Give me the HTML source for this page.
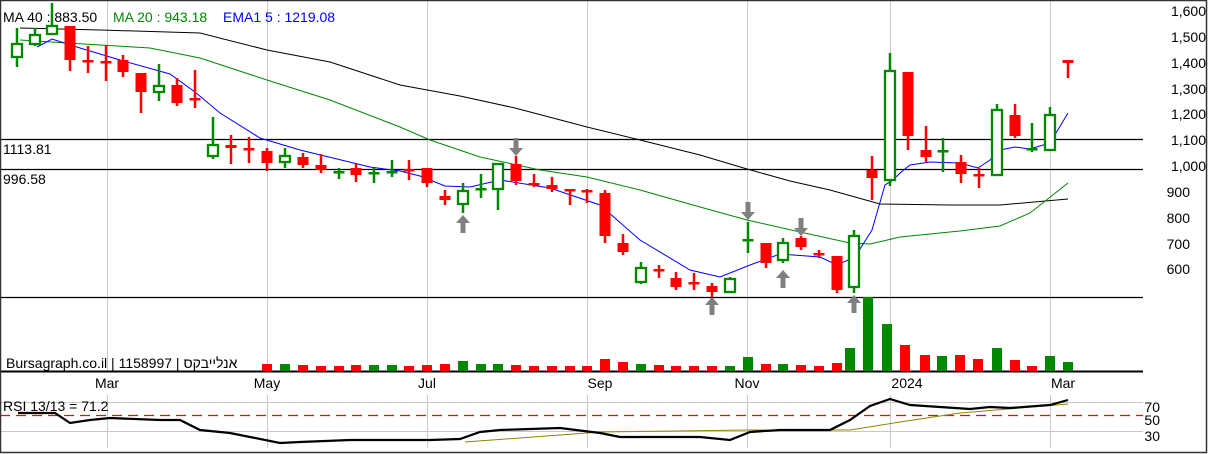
<!DOCTYPE html>
<html><head><meta charset="utf-8"><style>
html,body{margin:0;padding:0;background:#fff;}
svg{display:block;font-family:"Liberation Sans",sans-serif;}
</style></head><body>
<svg id="c" width="1208" height="454" viewBox="0 0 1208 454" xmlns="http://www.w3.org/2000/svg">
<rect x="0" y="0" width="1208" height="454" fill="#fff"/>
<g stroke="#c8c8c8" stroke-width="1">
<line x1="107.5" y1="0" x2="107.5" y2="371"/><line x1="267.5" y1="0" x2="267.5" y2="371"/>
<line x1="427.5" y1="0" x2="427.5" y2="371"/><line x1="587.5" y1="0" x2="587.5" y2="371"/>
<line x1="747.5" y1="0" x2="747.5" y2="371"/><line x1="890.5" y1="0" x2="890.5" y2="371"/>
<line x1="1050.5" y1="0" x2="1050.5" y2="371"/>
<line x1="107.5" y1="395" x2="107.5" y2="448"/><line x1="267.5" y1="395" x2="267.5" y2="448"/>
<line x1="427.5" y1="395" x2="427.5" y2="448"/><line x1="587.5" y1="395" x2="587.5" y2="448"/>
<line x1="747.5" y1="395" x2="747.5" y2="448"/><line x1="890.5" y1="395" x2="890.5" y2="448"/>
<line x1="1050.5" y1="395" x2="1050.5" y2="448"/>
<line x1="0" y1="402.5" x2="1143" y2="402.5"/><line x1="0" y1="431.5" x2="1143" y2="431.5"/>
</g>
<line x1="0" y1="415.5" x2="1143" y2="415.5" stroke="#f00" stroke-width="1.3" stroke-dasharray="10,6"/>
<g stroke="#000" stroke-width="1.3">
<line x1="0" y1="139.5" x2="1143" y2="139.5"/><line x1="0" y1="169.5" x2="1143" y2="169.5"/>
<line x1="0" y1="297.5" x2="1143" y2="297.5"/>
</g>
<line x1="0" y1="371.5" x2="1143" y2="371.5" stroke="#000" stroke-width="2"/>
<rect x="0.5" y="0.5" width="1206" height="452" fill="none" stroke="#333" stroke-width="1.5"/>
<polyline fill="none" stroke="#000" stroke-width="1" points="20,28 100,30 200,33 267,50 330,62 400,85 460,96 515,108 587,127 640,140 700,155 747,169 790,181 830,190 880,204 950,205 1000,205 1068,199"/>
<polyline fill="none" stroke="#080" stroke-width="1" points="20,40 100,45 150,48 200,58 267,80 330,100 400,127 430,140 480,157 540,170 587,177 640,190 700,207 747,220 800,232 850,243 870,244 900,237 960,231 1000,226 1030,213 1068,183"/>
<polyline fill="none" stroke="#00f" stroke-width="1" points="37,47 52,39 80,48 120,60 170,74 195,92 220,113 260,138 300,150 370,167 400,171 420,176 445,186 470,187 500,180 550,188 600,205 640,240 690,270 720,277 750,265 780,254 820,257 837,265 855,257 872,230 885,185 893,180 900,173 910,165 930,162 960,163 978,168 990,160 1000,150 1015,147 1030,149 1050,143 1068,113"/>
<g id="cand"></g>
<g id="vol"></g>
<polyline fill="none" stroke="#880" stroke-width="1" points="465,442 600,432 750,430 850,430 900,422 960,413 1068,404"/>
<polyline fill="none" stroke="#000" stroke-width="2.2" points="18,413 55,413 70,423 90,420 110,418 160,420 180,420 200,430 230,433 280,443 300,442 350,440 400,440 430,440 460,439 480,432 500,430 560,428 600,433 620,437 700,437 730,440 750,432 780,430 830,430 850,420 870,406 890,399 910,405 940,407 970,409 990,407 1010,408 1050,405 1068,400"/>
<g font-size="14" fill="#000">
<text x="3" y="22">MA 40 : 883.50</text>
<text x="113" y="22" fill="#080">MA 20 : 943.18</text>
<text x="223" y="22" fill="#00f">EMA1 5 : 1219.08</text>
<text x="3" y="154">1113.81</text>
<text x="3" y="184">996.58</text>
<text x="6" y="368">Bursagraph.co.il | 1158997 | אנלייבקס</text>
<text x="3" y="411">RSI 13/13 = 71.2</text>
<g fill="#000">
<text x="107" y="388" text-anchor="middle">Mar</text><text x="267" y="388" text-anchor="middle">May</text>
<text x="427" y="388" text-anchor="middle">Jul</text><text x="600" y="388" text-anchor="middle">Sep</text>
<text x="747" y="388" text-anchor="middle">Nov</text><text x="907" y="388" text-anchor="middle">2024</text>
<text x="1063" y="388" text-anchor="middle">Mar</text>
</g>
<g fill="#000" text-anchor="end">
<text x="1206" y="16">1,600</text><text x="1206" y="42">1,500</text><text x="1206" y="68">1,400</text>
<text x="1206" y="94">1,300</text><text x="1206" y="119">1,200</text><text x="1206" y="145">1,100</text>
<text x="1206" y="171">1,000</text><text x="1190" y="197">900</text><text x="1190" y="223">800</text>
<text x="1190" y="249">700</text><text x="1190" y="274">600</text>
<text x="1160" y="412">70</text><text x="1160" y="425">50</text><text x="1160" y="441">30</text>
</g>
</g>
</svg>
<script>
var C=[[17,'g',44,57,28,67],[35,'g',35,44,28,46],[52,'g',26,34,3,34],[70,'r',26,60,26,71],[88,'r',60,62,46,73],[106,'r',61,63,45,81],[123,'r',60,72,55,77],[141,'r',73,92,73,113],[159,'g',86,92,64,101],[177,'r',85,103,78,106],[195,'r',98,100,70,108],[213,'g',145,156,117,159],[231,'r',145,148,135,164],[249,'r',148,150,137,163],[267,'r',151,163,148,171],[285,'g',156,162,148,168],[303,'r',157,165,153,168],[321,'r',165,170,154,173],[339,'G',171,173,168,179],[356,'r',168,175,164,182],[374,'G',172,174,168,183],[392,'G',171,173,160,177],[409,'r',169,171,160,180],[427,'r',168,183,168,187],[445,'r',196,200,190,205],[463,'g',191,204,183,213],[481,'G',188,190,174,198],[498,'g',164,189,164,210],[516,'r',164,181,156,185],[534,'r',183,185,174,187],[552,'r',185,189,177,192],[570,'r',189,191,189,205],[587,'r',190,192,189,203],[605,'r',193,236,190,243],[623,'r',243,252,234,255],[641,'g',268,282,262,284],[659,'r',269,271,265,278],[676,'r',278,287,272,290],[694,'r',282,284,273,290],[712,'r',286,292,283,297],[730,'g',279,292,277,292],[748,'G',239,241,222,253],[766,'r',243,263,243,268],[783,'g',243,260,238,263],[801,'r',238,247,236,250],[819,'r',253,255,250,258],[837,'r',256,290,256,293],[854,'g',236,287,230,293],[872,'r',170,178,156,200],[890,'g',71,180,53,186],[908,'r',72,136,72,150],[926,'r',150,157,126,162],[943,'G',150,152,138,172],[961,'r',162,174,155,183],[979,'r',174,176,168,188],[997,'g',110,175,104,175],[1015,'r',115,136,104,138],[1032,'G',148,150,123,152],[1050,'g',115,150,107,150],[1068,'r',60,63,60,78]];
var s='';C.forEach(function(c){var x=c[0],t=c[1],col=(t=='r')?'#f00':'#080';
s+='<line x1="'+x+'" y1="'+c[4]+'" x2="'+x+'" y2="'+c[5]+'" stroke="'+col+'" stroke-width="2.5"/>';
if(t=='g')s+='<rect x="'+(x-5)+'" y="'+c[2]+'" width="10" height="'+(c[3]-c[2])+'" fill="#fff" stroke="#080" stroke-width="2.3"/>';
else{var h=Math.max(c[3]-c[2],2.5);s+='<rect x="'+(x-5.5)+'" y="'+c[2]+'" width="11" height="'+h+'" fill="'+col+'"/>';}});
[[463,'d',215],[516,'u',138],[712,'d',297],[748,'u',202],[783,'d',270],[801,'u',218],[854,'d',295]].forEach(function(a){var x=a[0],y=a[2];
if(a[1]=='d')s+='<path d="M'+x+' '+y+' l-7 8 h4.5 v10 h5 v-10 h4.5z" fill="#808080"/>';
else s+='<path d="M'+(x-2.5)+' '+y+' v10 h-4.5 l7 8 l7 -8 h-4.5 v-10z" fill="#808080"/>';});
document.getElementById('cand').innerHTML=s;
var V=[[267,'r',364],[285,'g',364],[303,'r',365],[321,'r',366],[339,'r',366],[356,'r',365],[374,'g',365],[392,'g',365],[409,'r',366],[427,'r',365],[445,'r',364],[463,'g',361],[481,'g',364],[498,'g',364],[516,'r',365],[534,'r',366],[552,'r',366],[570,'r',366],[587,'r',366],[605,'r',359],[623,'r',362],[641,'g',364],[659,'r',365],[676,'r',366],[694,'r',366],[712,'r',366],[730,'g',366],[748,'g',357],[766,'r',364],[783,'g',364],[801,'r',365],[819,'r',366],[837,'r',363],[850,'g',348],[868,'g',297],[887,'g',324],[905,'r',345],[925,'r',355],[942,'g',356],[960,'r',355],[978,'r',359],[997,'g',348],[1015,'r',360],[1032,'r',366],[1050,'g',356],[1068,'g',362]];
var v='';V.forEach(function(b){v+='<rect x="'+(b[0]-5)+'" y="'+b[2]+'" width="10" height="'+(371-b[2])+'" fill="'+(b[1]=='r'?'#f00':'#080')+'"/>';});
document.getElementById('vol').innerHTML=v;
</script>
</body></html>
